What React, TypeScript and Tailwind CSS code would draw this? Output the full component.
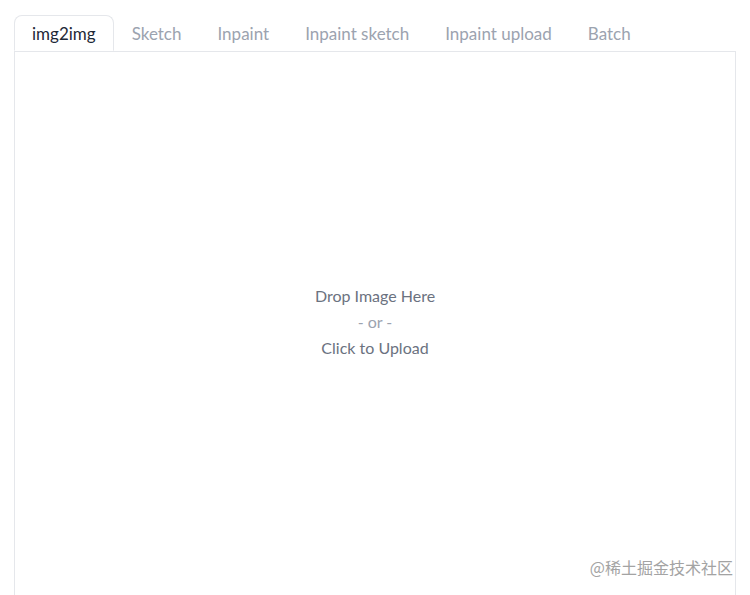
const tabs = ['img2img', 'Sketch', 'Inpaint', 'Inpaint sketch', 'Inpaint upload', 'Batch'];

export default function App() {
  return (
    <div className="relative h-[595px] w-[750px] overflow-hidden bg-white pl-[14px] pr-[14px] pt-[15px]" style={{ fontFamily: '"Lato", "Noto Sans", sans-serif' }}>
      <div className="flex">
        {tabs.map((t, i) =>
          i === 0 ? (
            <div
              key={t}
              className="relative z-10 -mb-px flex h-[36px] items-center rounded-t-lg border border-b-white border-[#e5e7eb] bg-white px-[17px] pt-[2px] text-[17px] text-[#1f2937]"
            >
              {t}
            </div>
          ) : (
            <div key={t} className="flex h-[36px] items-center px-[18px] pt-[2px] text-[17px] text-[#9ca3af]">
              {t}
            </div>
          )
        )}
      </div>
      <div className="flex h-[546px] flex-col items-center justify-center border border-[#e5e7eb] bg-white pb-[4px] text-[16px] leading-[26px]">
        <div className="text-[#6b7280]">Drop Image Here</div>
        <div className="text-[#9ca3af]">- or -</div>
        <div className="text-[#6b7280]">Click to Upload</div>
      </div>
      <div
        className="absolute bottom-[16px] right-[17px] text-[16px] text-[#a3a3a3]"
        style={{ fontFamily: '"Noto Sans CJK SC", sans-serif' }}
      >
        @稀土掘金技术社区
      </div>
    </div>
  );
}
